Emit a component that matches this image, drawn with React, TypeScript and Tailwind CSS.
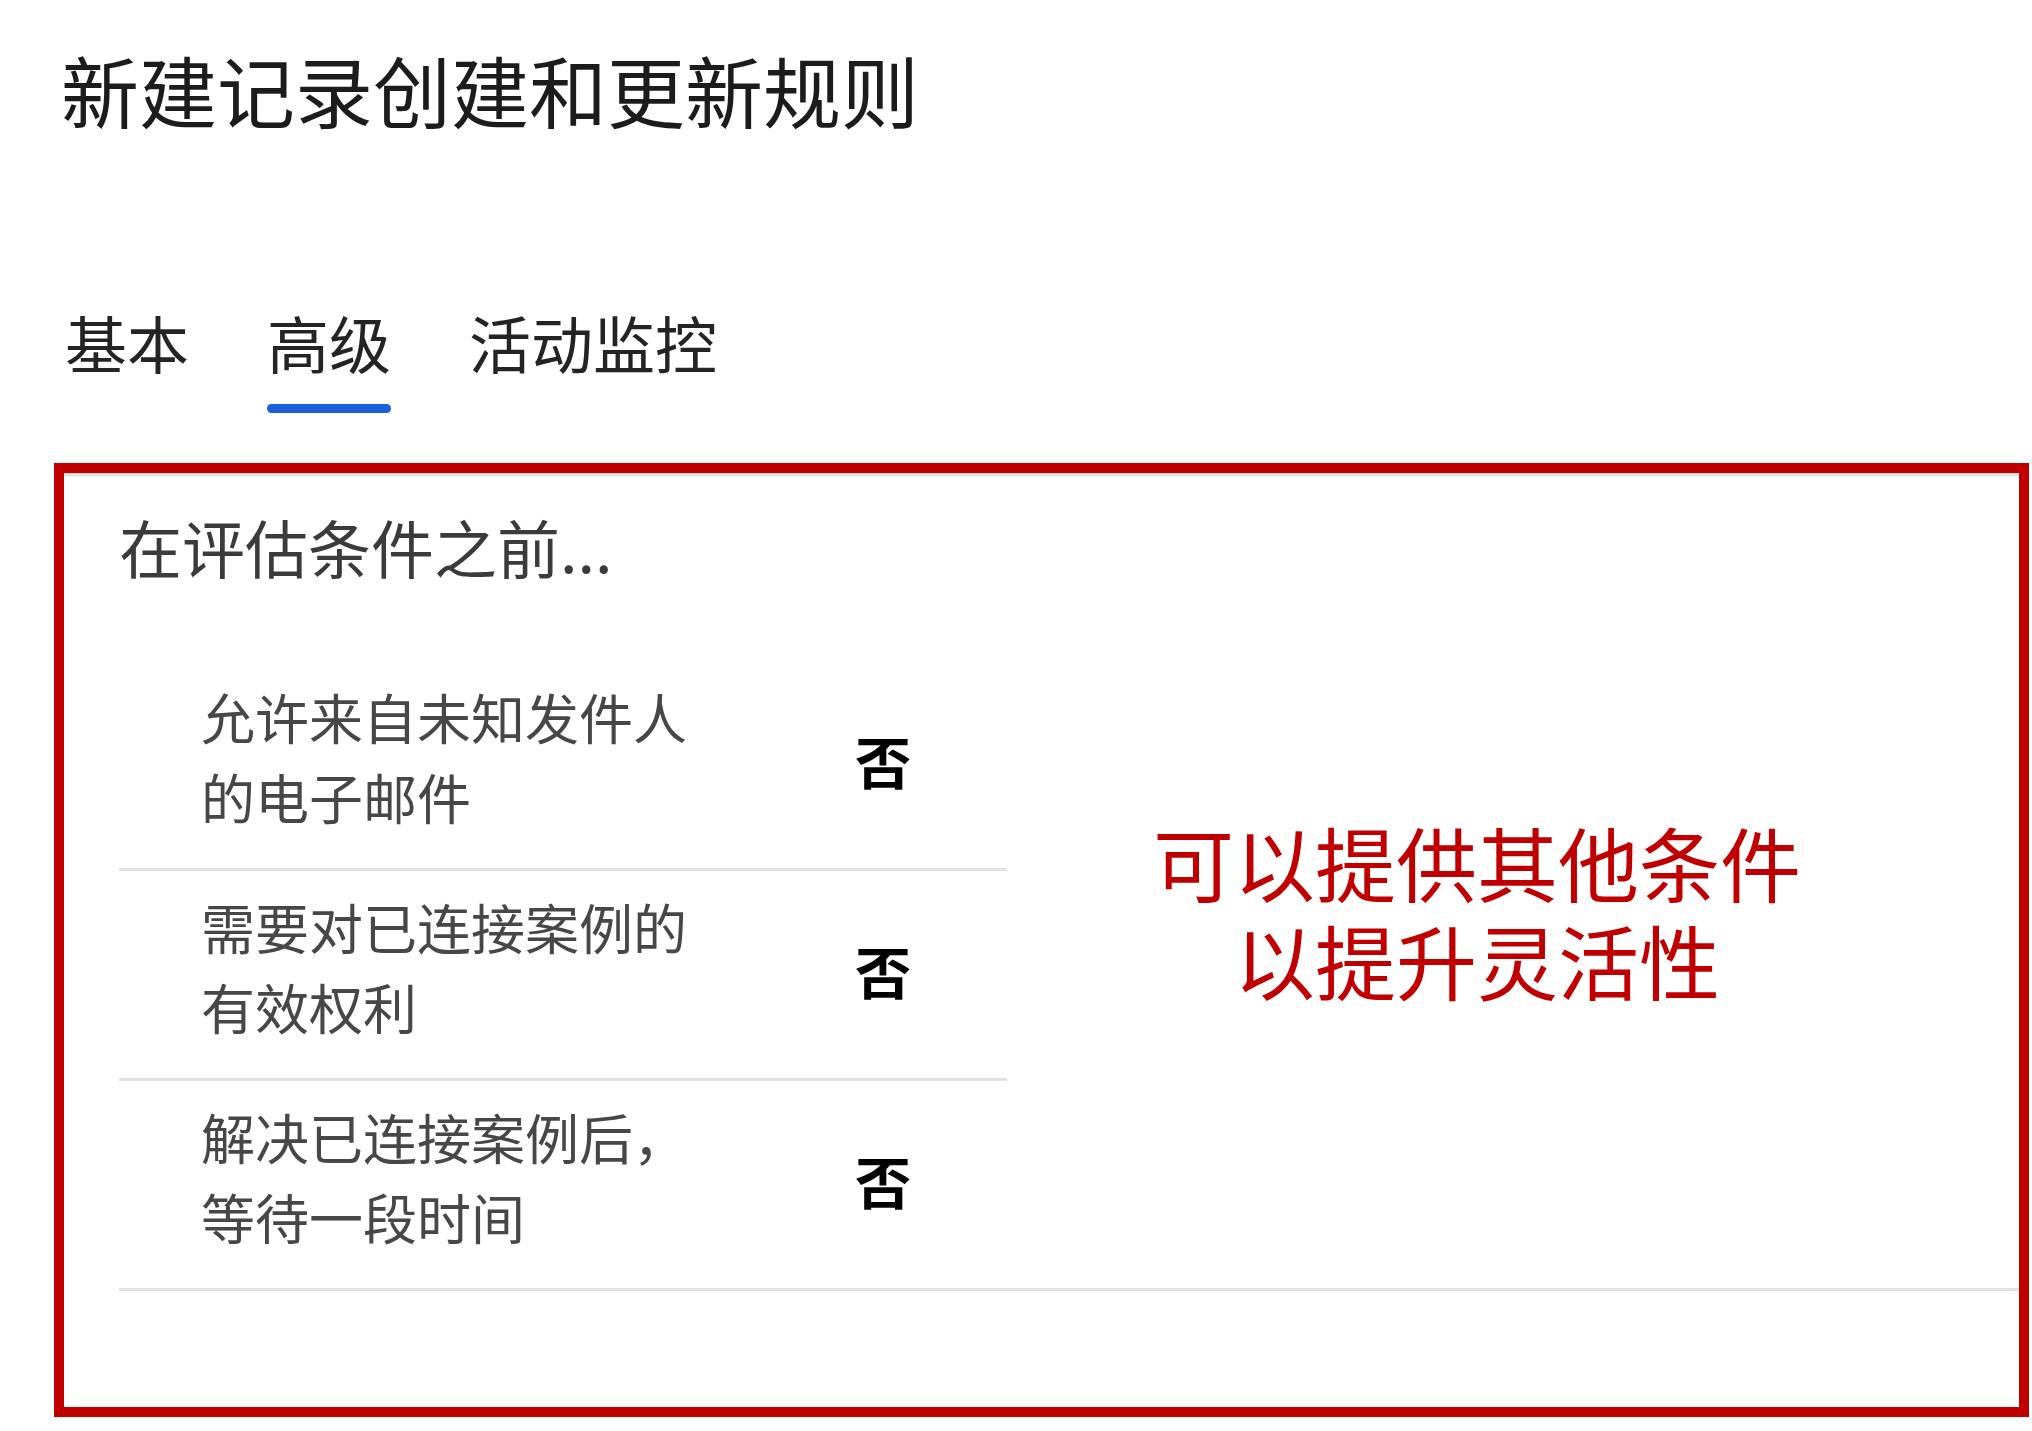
const rows = [
  ['允许来自未知发件人', '的电子邮件'],
  ['需要对已连接案例的', '有效权利'],
  ['解决已连接案例后，', '等待一段时间'],
];

function RuleRow({ lines, last }: { lines: string[]; last: boolean }) {
  return (
    <div className={last ? 'w-full' : 'w-[888px]'}>
      <div className="flex items-center pt-[16px] pb-[31px]">
        <div className="w-[736px] pl-[82px] text-[54px] leading-[80px] text-[#474747]">
          {lines.map((l) => (
            <div key={l}>{l}</div>
          ))}
        </div>
        <div className="pt-[6px] text-[56px] leading-[60px] font-bold text-black">否</div>
      </div>
      <div className="h-[3px] bg-[#e1e1e1]" />
    </div>
  );
}

export default function App() {
  return (
    <div className="h-[1431px] w-[2032px] overflow-hidden bg-white font-['Noto_Sans_CJK_SC',sans-serif]">
      <h1 className="pl-[61px] pt-[50px] text-[78px] leading-[78px] font-normal text-[#1c1c1c]">
        新建记录创建和更新规则
      </h1>

      <nav className="mt-[183px] flex gap-[78px] pl-[65px] text-[62px] leading-[62px] text-[#242424]">
        <span>基本</span>
        <span className="relative">
          高级
          <span className="absolute left-0 right-0 top-[93px] h-[9px] rounded-full bg-[#1b5fdc]" />
        </span>
        <span>活动监控</span>
      </nav>

      <section className="relative mt-[90px] ml-[54px] h-[954px] w-[1975px] border-[10px] border-[#c00000]">
        <div className="h-[4px] bg-gradient-to-b from-[#d9d9d9] to-[#f0f0f0]" />
        <div className="pl-[55px]">
          <h2 className="pt-[37px] text-[63px] leading-[63px] text-[#3b3b3b]">在评估条件之前...</h2>
          <div className="mt-[84px]">
            {rows.map((r, i) => (
              <RuleRow key={i} lines={r} last={i === rows.length - 1} />
            ))}
          </div>
        </div>

        <div className="absolute left-[1013px] top-[339px] w-[800px] text-center text-[81px] leading-[98px] text-[#c00000]">
          可以提供其他条件
          <br />
          以提升灵活性
        </div>
      </section>
    </div>
  );
}
